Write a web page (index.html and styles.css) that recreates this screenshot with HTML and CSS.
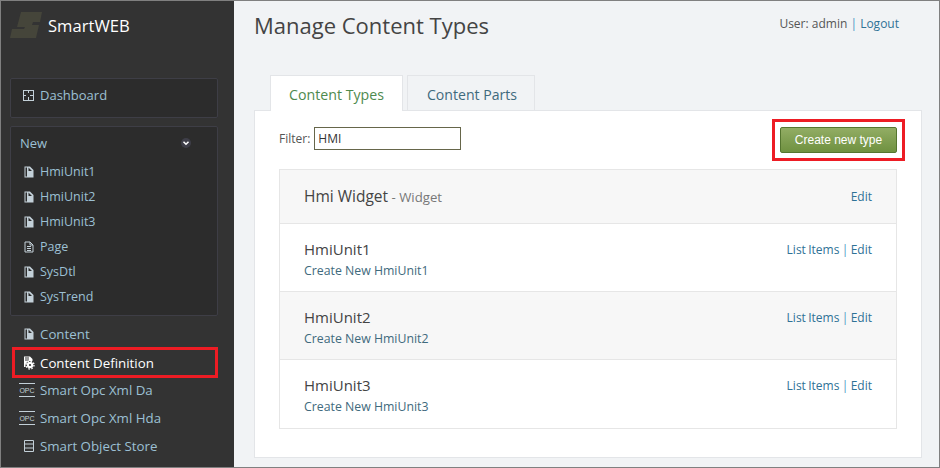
FILE: index.html
```html
<!DOCTYPE html>
<html lang="en">
<head>
<meta charset="utf-8">
<title>Manage Content Types</title>
<link rel="stylesheet" href="styles.css">
</head>
<body>
<div class="frame">
  <aside class="sidebar">
    <div class="brand">
      <svg class="logo" width="32" height="26" viewBox="0 0 32 26"><path d="M11 0H32L30 10H23L22 13H29L26 26H0L2 17H14L15 15H7Z" fill="#45453a"/></svg>
      <span class="brand-name">SmartWEB</span>
    </div>
    <div class="box box-dash">
      <a class="item"><svg class="ic" viewBox="0 0 12 12" shape-rendering="crispEdges"><path d="M1 1h10v10H1zM6 1v3M6 8v3M1 6h3M8 6h3" fill="none" stroke="#c3d0d8" stroke-width="1"/></svg>Dashboard</a>
    </div>
    <div class="box box-new">
      <div class="new-head"><span>New</span><span class="chev"><svg width="10" height="10" viewBox="0 0 10 10"><circle cx="5" cy="5" r="5" fill="#3e3e48"/><path d="M2.500 3.800L5 6.300 7.500 3.800" fill="none" stroke="#fff" stroke-width="1.500"/></svg></span></div>
      <a class="sub"><svg class="ic"  viewBox="0 0 12 12"><use href="#doc"/></svg>HmiUnit1</a>
      <a class="sub"><svg class="ic"  viewBox="0 0 12 12"><use href="#doc"/></svg>HmiUnit2</a>
      <a class="sub"><svg class="ic"  viewBox="0 0 12 12"><use href="#doc"/></svg>HmiUnit3</a>
      <a class="sub"><svg class="ic"  viewBox="0 0 12 12"><path d="M2 1h5l3 3v7H2zM7 1v3h3M4 5.500h4M4 7.500h4M4 9.500h4" fill="none" stroke="#c3d0d8"/></svg>Page</a>
      <a class="sub"><svg class="ic"  viewBox="0 0 12 12"><use href="#doc"/></svg>SysDtl</a>
      <a class="sub"><svg class="ic"  viewBox="0 0 12 12"><use href="#doc"/></svg>SysTrend</a>
    </div>
    <nav class="links">
      <a class="link"><svg class="ic" viewBox="0 0 12 12"><use href="#doc"/></svg>Content</a>
      <a class="link active"><svg class="ic ic-gear" viewBox="0 0 12 14"><path d="M1 .5h6L9.500 3V5H5L2.500 8v3H1zM2 1.500v1h4v-1zM2 3.500v1h4v-1z" fill="#fff" fill-rule="evenodd"/><circle cx="7" cy="9" r="3.200" fill="#fff"/><circle cx="7" cy="9" r="4" fill="none" stroke="#fff" stroke-width="1.300" stroke-dasharray="1.600 1.540"/><circle cx="7" cy="9" r="1.100" fill="#333"/></svg>Content Definition</a>
      <a class="link"><svg class="opc" viewBox="0 0 16 14"><path d="M0 .5h16M0 13.500h16" stroke="#c3d0d8"/><text x="8" y="10" text-anchor="middle" class="opc-text">OPC</text></svg>Smart Opc Xml Da</a>
      <a class="link"><svg class="opc" viewBox="0 0 16 14"><path d="M0 .5h16M0 13.500h16" stroke="#c3d0d8"/><text x="8" y="10" text-anchor="middle" class="opc-text">OPC</text></svg>Smart Opc Xml Hda</a>
      <a class="link"><svg class="ic" viewBox="0 0 12 12"><path d="M1.500 .5h9v11h-9zM1.500 4h9M1.500 8h9" fill="none" stroke="#c3d0d8"/></svg>Smart Object Store</a>
    </nav>
    <svg class="defs" width="0" height="0"><defs><path id="doc" fill-rule="evenodd" d="M1.500 .5H7l3.500 3.500V11.500H1.500zM2.500 1.500V10.500H4V1.500zM5.500 1.500V5H9z" fill="#c3d0d8"/></defs></svg>
  </aside>
  <main class="main">
    <header class="top">
      <h1 class="title">Manage Content Types</h1>
      <div class="user">User: admin <span class="sep">|</span> <a class="lnk">Logout</a></div>
    </header>
    <div class="tabs">
      <a class="tab tab-on">Content Types</a>
      <a class="tab">Content Parts</a>
    </div>
    <section class="panel">
      <div class="toolbar">
        <label class="filter">Filter: <input class="input" type="text" value="HMI"></label>
        <div class="btn-mark"><button class="btn">Create new type</button></div>
      </div>
      <div class="list">
        <div class="row row-alt row-first">
          <div><span class="name">Hmi Widget</span><span class="stereo"> - Widget</span></div>
          <div class="actions"><a class="lnk">Edit</a></div>
        </div>
        <div class="row">
          <div><div class="name">HmiUnit1</div><a class="create">Create New HmiUnit1</a></div>
          <div class="actions"><a class="lnk">List Items</a> <span class="sep">|</span> <a class="lnk">Edit</a></div>
        </div>
        <div class="row row-alt">
          <div><div class="name">HmiUnit2</div><a class="create">Create New HmiUnit2</a></div>
          <div class="actions"><a class="lnk">List Items</a> <span class="sep">|</span> <a class="lnk">Edit</a></div>
        </div>
        <div class="row">
          <div><div class="name">HmiUnit3</div><a class="create">Create New HmiUnit3</a></div>
          <div class="actions"><a class="lnk">List Items</a> <span class="sep">|</span> <a class="lnk">Edit</a></div>
        </div>
      </div>
    </section>
  </main>
</div>
</body>
</html>
```
FILE: styles.css
```css
* { box-sizing: border-box; }
html, body { margin: 0; padding: 0; }
body { font-family: "Open Sans", "Noto Sans", sans-serif; font-size: 12px; color: #444; overflow: hidden; }
.frame { width: 940px; height: 468px; display: flex; border: 1px solid #808080; overflow: hidden; background: #f1f3f5; }

.sidebar { width: 233px; flex: none; background: #333; padding: 11px 15px 0 9px; color: #9cc0d4; display: flex; flex-direction: column; }
.brand { height: 66px; display: flex; align-items: flex-start; }
.logo { flex: none; }
.brand-name { margin-left: 6px; margin-top: 1px; color: #fff; font-size: 16.600px; line-height: 26px; }
.box { background: #2c2c2c; border: 1px solid #3e3e46; border-radius: 2px; width: 208px; }
.box-dash { height: 40px; padding: 6px 11px; margin-bottom: 8px; }
.box-new { height: 190px; padding: 6px 9px; margin-bottom: 4px; }
.item, .sub, .link { display: flex; align-items: center; color: #9cc0d4; white-space: nowrap; }
.item { font-size: 13px; line-height: 20px; }
.ic { width: 12px; height: 12px; margin-right: 5px; flex: none; }
.item .ic { margin-right: 6px; }
.ic-gear { height: 14px; overflow: visible; }
.new-head { display: flex; justify-content: space-between; align-items: center; font-size: 13px; line-height: 20px; padding-right: 17px; margin-bottom: 6px; }
.chev { display: flex; }
.sub { height: 25px; font-size: 12.500px; padding-left: 3px; }
.links { display: flex; flex-direction: column; }
.link { height: 28px; font-size: 13.300px; padding-left: 13px; width: 208px; }
.link.active { color: #fff; outline: 3px solid #ed1c24; outline-offset: -3px; margin-left: 2px; padding-left: 11px; width: 206px; height: 31px; margin-top: -1px; margin-bottom: -2px; }
.opc { width: 16px; height: 14px; margin: 0 5px 0 -4px; flex: none; }
.opc-text { font-size: 7px; fill: #c3d0d8; font-family: "Liberation Sans", sans-serif; }
.defs { position: absolute; }

.main { flex: 1; padding-left: 20px; padding-right: 17px; min-width: 0; }
.top { display: flex; justify-content: space-between; align-items: flex-start; height: 74px; }
.title { margin: 8px 0 0; font-size: 22px; line-height: 32px; font-weight: 400; color: #444; }
.user { margin: 14px 23px 0 0; font-size: 12px; line-height: 18px; color: #555; }
.lnk { color: #2f7296; }
.sep { color: #4a96c4; }
.tabs { display: flex; gap: 4px; margin-left: 16px; height: 36px; position: relative; z-index: 1; }
.tab { height: 35px; padding: 0 17px 0 19px; border: 1px solid #e3e5e8; border-bottom: 0; font-size: 14.100px; line-height: 38px; color: #3f6a7d; background: #f1f3f5; }
.tab-on { height: 36px; background: #fff; color: #4e8a4e; padding: 0 18px; font-size: 14.200px; }
.panel { background: #fff; border: 1px solid #e3e5e8; height: 348px; margin-top: -1px; padding: 16px 24px 0; width: 668px; }
.toolbar { display: flex; justify-content: space-between; align-items: flex-start; height: 42px; }
.filter { display: flex; align-items: center; gap: 4px; color: #555; height: 23px; }
.input { width: 147px; height: 23px; border: 1px solid #66664a; padding: 0 3px; font: 12px "Open Sans", sans-serif; color: #333; border-radius: 0; outline: 0; }
.btn-mark { border: 3px solid #ed1c24; margin: -8px -8px 0 0; padding: 5px; display: flex; }
.btn { width: 117px; height: 26px; padding: 0; border: 1px solid #54752f; border-radius: 2px; background: linear-gradient(#92ad64, #6f9140); color: #fff; font: 12px "Liberation Sans", sans-serif; }
.list { border: 1px solid #e6e6e6; width: 618px; }
.row { display: flex; justify-content: space-between; align-items: flex-start; height: 68px; padding: 14px 24px 0; border-bottom: 1px solid #e6e6e6; background: #fff; }
.row:last-child { border-bottom: 0; }
.row-alt { background: #f7f7f7; }
.row-first { height: 54px; padding-top: 15px; }
.name { font-size: 15px; line-height: 22px; color: #444; }
.row-first .name { font-size: 15.500px; }
.stereo { color: #777; font-size: 13.200px; }
.create { display: block; margin-top: 1px; font-size: 12.300px; line-height: 20px; color: #3f6a7d; }
.actions { margin-top: 1px; font-size: 12px; line-height: 22px; color: #2f7296; word-spacing: -0.800px; }
```
